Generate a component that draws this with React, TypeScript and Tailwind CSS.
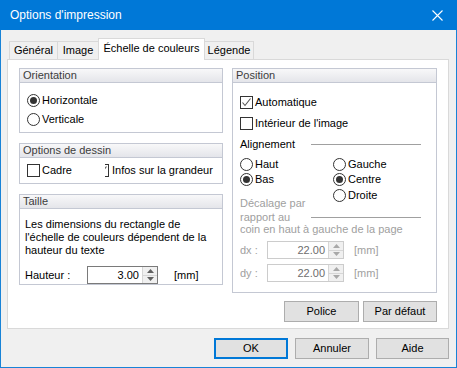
import React from 'react'

const font = { fontFamily: '"Liberation Sans", Arial, sans-serif' }

const Radio = ({ checked, disabled }: { checked?: boolean; disabled?: boolean }) => (
  <span
    className={`flex items-center justify-center w-[13px] h-[13px] rounded-full border bg-white shrink-0 ${
      disabled ? 'border-[#bcbcbc]' : 'border-[#333333]'
    }`}
  >
    {checked && <span className="w-[7px] h-[7px] rounded-full bg-[#333333]" />}
  </span>
)

const Check = ({ checked }: { checked?: boolean }) => (
  <span className="flex items-center justify-center w-[13px] h-[13px] border border-[#333333] bg-white shrink-0">
    {checked && (
      <svg width="11" height="11" viewBox="0 0 11 11">
        <polyline points="1.5,5.5 4,8.5 9.5,1.5" fill="none" stroke="#555" strokeWidth="1.1" />
      </svg>
    )}
  </span>
)

const Group = ({
  title,
  className,
  children,
}: {
  title: string
  className?: string
  children: React.ReactNode
}) => (
  <div className={`border border-[#c4c8d3] bg-white ${className || ''}`}>
    <div className="h-[14px] leading-[13px] pl-[3px] text-[11px] text-[#3c3c3c] bg-gradient-to-b from-[#f8f8f9] to-[#e4e5ea] border-b border-[#c4c8d3]">
      {title}
    </div>
    {children}
  </div>
)

const Spin = ({ value, disabled, className }: { value: string; disabled?: boolean; className?: string }) => (
  <div
    className={`flex h-[18px] border bg-white ${disabled ? 'border-[#cccccc]' : 'border-[#7a7a7a]'} ${className || ''}`}
  >
    <div
      className={`flex-1 text-right pr-[3px] leading-[16px] text-[11px] ${
        disabled ? 'text-[#6d6d6d]' : 'text-black'
      }`}
    >
      {value}
    </div>
    <div className="flex flex-col w-[15px] border-l border-[#d6d6d6]">
      <div className="flex-1 flex items-center justify-center bg-[#f0f0f0] border-b border-[#d6d6d6]">
        <svg width="7" height="4" viewBox="0 0 7 4">
          <polygon points="0,4 3.5,0 7,4" fill={disabled ? '#a8a8a8' : '#606060'} />
        </svg>
      </div>
      <div className="flex-1 flex items-center justify-center bg-[#f0f0f0]">
        <svg width="7" height="4" viewBox="0 0 7 4">
          <polygon points="0,0 3.5,4 7,0" fill={disabled ? '#a8a8a8' : '#606060'} />
        </svg>
      </div>
    </div>
  </div>
)

const Button = ({ label, focused, className }: { label: string; focused?: boolean; className?: string }) => (
  <button
    className={`h-[21px] bg-[#e1e1e1] text-[11px] text-black ${
      focused ? 'border-2 border-[#0078d7]' : 'border border-[#adadad]'
    } ${className || ''}`}
  >
    {label}
  </button>
)

export default function App() {
  return (
    <div
      style={font}
      className="w-[457px] h-[368px] border border-[#1883d7] border-t-0 bg-[#f0f0f0] flex flex-col text-[11px] text-black"
    >
      {/* title bar */}
      <div className="h-[30px] -mx-px bg-[#0078d7] flex items-center justify-between pl-[10px] pr-[14px] text-white text-[12px]">
        <span>Options d'impression</span>
        <svg width="11" height="11" viewBox="0 0 11 11">
          <path d="M0.5 0.5 L10.5 10.5 M10.5 0.5 L0.5 10.5" stroke="white" strokeWidth="1.1" />
        </svg>
      </div>

      <div className="pl-[6px] pr-[7px] pt-[8px]">
        {/* tabs */}
        <div className="flex items-end h-[21px] pl-[2px]">
          <div className="w-[49px] h-[18px] border border-b-0 border-[#d9d9d9] bg-[#f0f0f0] text-center leading-[17px]">
            Général
          </div>
          <div className="-ml-px w-[42px] h-[18px] border border-b-0 border-[#d9d9d9] bg-[#f0f0f0] text-center leading-[17px]">
            Image
          </div>
          <div className="-ml-px w-[107px] h-[22px] -mb-px relative z-10 border border-b-0 border-[#d9d9d9] bg-white text-center leading-[19px]">
            Échelle de couleurs
          </div>
          <div className="-ml-px w-[50px] h-[18px] border border-b-0 border-[#d9d9d9] bg-[#f0f0f0] text-center leading-[17px]">
            Légende
          </div>
        </div>

        {/* panel */}
        <div className="h-[270px] w-[442px] border border-[#d9d9d9] bg-white flex flex-col">
          <div className="flex gap-[9px] pl-[11px] pt-[8px]">
            {/* left column */}
            <div className="w-[204px] flex flex-col gap-[10px]">
              <Group title="Orientation" className="h-[65px]">
                <div className="pt-[8px] pl-[7px]">
                  <div className="h-[19px] flex items-center gap-[2px]">
                    <Radio checked />
                    <span>Horizontale</span>
                  </div>
                  <div className="h-[19px] flex items-center gap-[2px]">
                    <Radio />
                    <span>Verticale</span>
                  </div>
                </div>
              </Group>

              <Group title="Options de dessin" className="h-[41px]">
                <div className="h-[25px] flex items-center pl-[7px]">
                  <div className="w-[78px] flex items-center gap-[2px]">
                    <Check />
                    <span>Cadre</span>
                  </div>
                  <div className="flex items-center gap-[3px]">
                    <span className="w-[4px] h-[13px] overflow-hidden flex justify-end">
                      <Check checked />
                    </span>
                    <span>Infos sur la grandeur</span>
                  </div>
                </div>
              </Group>

              <Group title="Taille" className="h-[91px]">
                <div className="pl-[5px] pt-[9px] leading-[13px]">
                  Les dimensions du rectangle de
                  <br />
                  l'échelle de couleurs dépendent de la
                  <br />
                  hauteur du texte
                </div>
                <div className="flex items-center mt-[9px] pl-[5px]">
                  <span className="w-[62px]">Hauteur :</span>
                  <Spin value="3.00" className="w-[71px]" />
                  <span className="ml-[16px]">[mm]</span>
                </div>
              </Group>
            </div>

            {/* right column */}
            <div className="w-[205px]">
              <Group title="Position" className="h-[225px]">
                <div className="pl-[7px] pr-[15px] pt-[10px]">
                  <div className="h-[18px] flex items-center gap-[2px]">
                    <Check checked />
                    <span>Automatique</span>
                  </div>
                  <div className="h-[21px] mt-[2px] flex items-center gap-[2px]">
                    <Check />
                    <span>Intérieur de l'image</span>
                  </div>
                  <div className="h-[20px] flex items-center">
                    <span className="w-[71px]">Alignement</span>
                    <span className="flex-1 h-px bg-[#a0a0a0] mt-[1px]" />
                  </div>
                  <div className="flex pt-[2px]">
                    <div className="w-[93px] pt-[1px]">
                      <div className="h-[15px] flex items-center gap-[2px]">
                        <Radio />
                        <span>Haut</span>
                      </div>
                      <div className="h-[15px] flex items-center gap-[2px]">
                        <Radio checked />
                        <span>Bas</span>
                      </div>
                    </div>
                    <div className="pt-[1px]">
                      <div className="h-[15px] flex items-center gap-[2px]">
                        <Radio />
                        <span>Gauche</span>
                      </div>
                      <div className="h-[15px] flex items-center gap-[2px]">
                        <Radio checked />
                        <span>Centre</span>
                      </div>
                      <div className="h-[16px] flex items-center gap-[2px]">
                        <Radio />
                        <span>Droite</span>
                      </div>
                    </div>
                  </div>
                  <div className="flex items-end -mt-[7px] text-[#a0a0a0]">
                    <div className="w-[71px] leading-[14px]">
                      Décalage par
                      <br />
                      rapport au
                    </div>
                    <span className="flex-1 h-px bg-[#a0a0a0] mb-[6px]" />
                  </div>
                  <div className="text-[#a0a0a0] leading-[13px] -mt-px">coin en haut à gauche de la page</div>
                  <div className="flex items-center mt-[5px] text-[#a0a0a0]">
                    <span className="w-[27px]">dx :</span>
                    <Spin value="22.00" disabled className="w-[77px]" />
                    <span className="ml-[10px]">[mm]</span>
                  </div>
                  <div className="flex items-center mt-[5px] text-[#a0a0a0]">
                    <span className="w-[27px]">dy :</span>
                    <Spin value="22.00" disabled className="w-[77px]" />
                    <span className="ml-[10px]">[mm]</span>
                  </div>
                </div>
              </Group>
            </div>
          </div>

          <div className="flex justify-end gap-[4px] pr-[11px] mt-[8px]">
            <Button label="Police" className="w-[75px]" />
            <Button label="Par défaut" className="w-[74px]" />
          </div>
        </div>

        {/* dialog buttons */}
        <div className="flex justify-end gap-[7px] mt-[9px]">
          <Button label="OK" focused className="w-[74px]" />
          <Button label="Annuler" className="w-[74px]" />
          <Button label="Aide" className="w-[73px]" />
        </div>
      </div>
    </div>
  )
}
